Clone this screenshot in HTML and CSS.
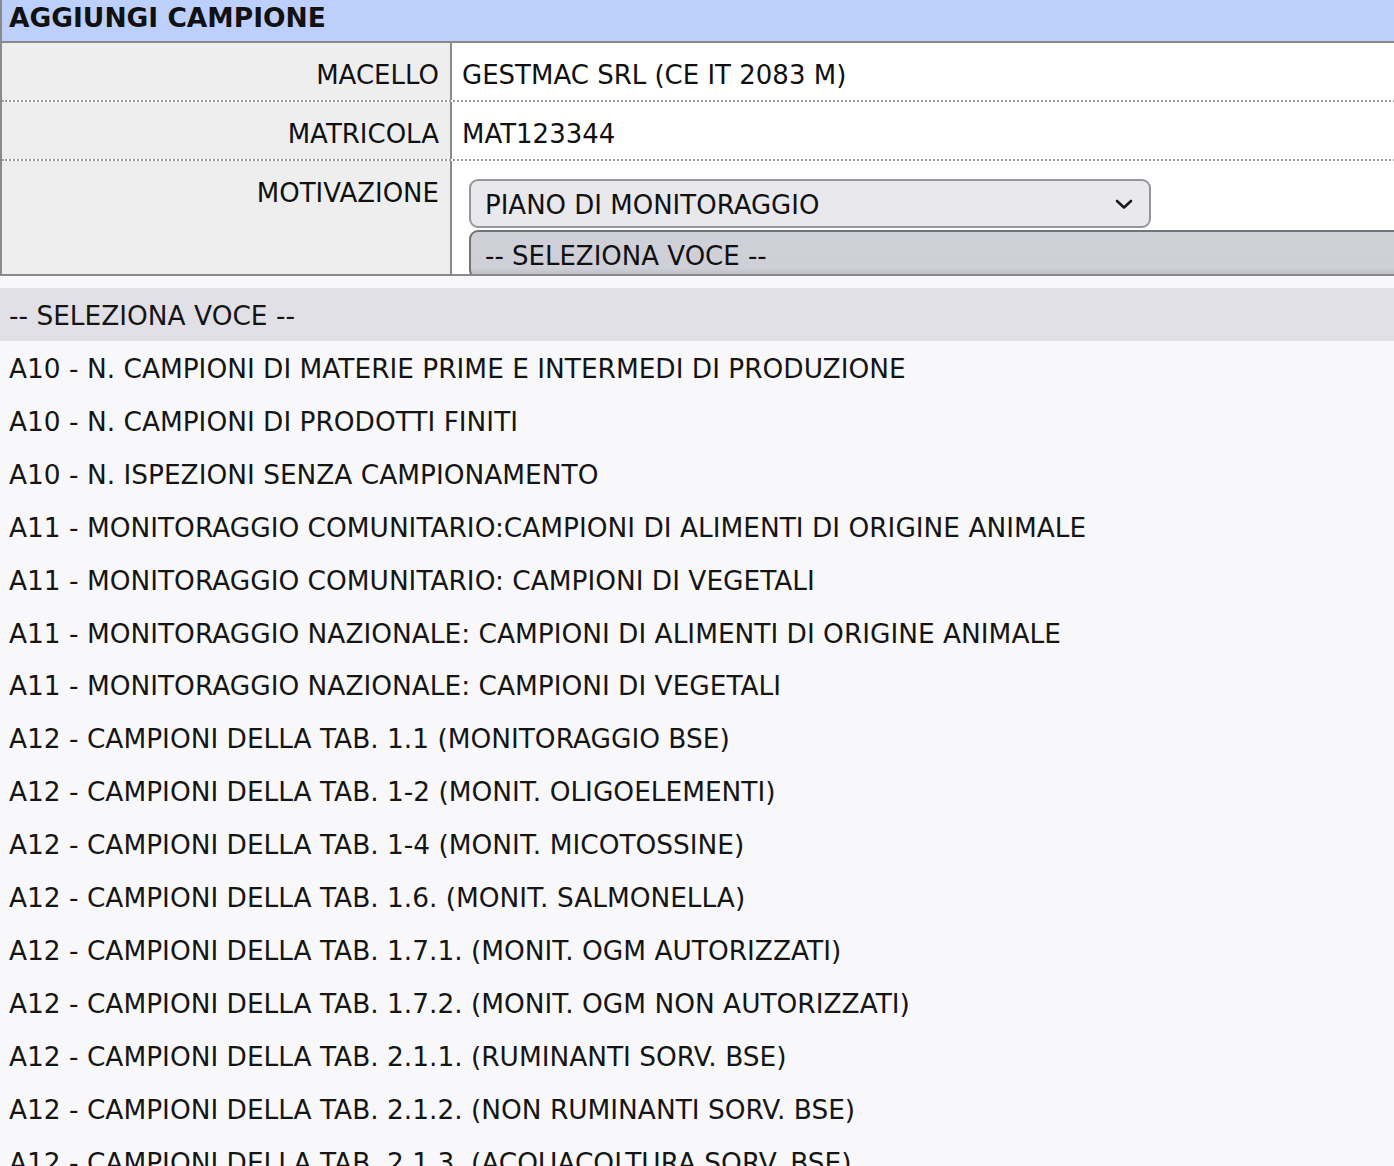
FILE: index.html
```html
<!DOCTYPE html>
<html lang="it">
<head>
<meta charset="utf-8">
<title>Aggiungi campione</title>
<link rel="stylesheet" href="styles.css">
</head>
<body>
<div class="panel">
  <div class="panel-title">AGGIUNGI CAMPIONE</div>
  <div class="row row-line">
    <div class="label">MACELLO</div>
    <div class="value">GESTMAC SRL (CE IT 2083 M)</div>
  </div>
  <div class="row row-line">
    <div class="label">MATRICOLA</div>
    <div class="value">MAT123344</div>
  </div>
  <div class="row row-last">
    <div class="label label-top">MOTIVAZIONE</div>
    <div class="value value-selects">
      <div class="select select-closed">
        <span>PIANO DI MONITORAGGIO</span>
        <svg class="chevron" width="18" height="12" viewBox="0 0 18 12"><path d="M2 3 L9 9.5 L16 3" fill="none" stroke="#1c1c1e" stroke-width="2.6" stroke-linecap="round" stroke-linejoin="round"/></svg>
      </div>
      <div class="select select-open">
        <span>-- SELEZIONA VOCE --</span>
      </div>
    </div>
  </div>
</div>
<ul class="dropdown">
  <li class="opt opt-active">-- SELEZIONA VOCE --</li>
  <li class="opt">A10 - N. CAMPIONI DI MATERIE PRIME E INTERMEDI DI PRODUZIONE</li>
  <li class="opt">A10 - N. CAMPIONI DI PRODOTTI FINITI</li>
  <li class="opt">A10 - N. ISPEZIONI SENZA CAMPIONAMENTO</li>
  <li class="opt">A11 - MONITORAGGIO COMUNITARIO:CAMPIONI DI ALIMENTI DI ORIGINE ANIMALE</li>
  <li class="opt">A11 - MONITORAGGIO COMUNITARIO: CAMPIONI DI VEGETALI</li>
  <li class="opt">A11 - MONITORAGGIO NAZIONALE: CAMPIONI DI ALIMENTI DI ORIGINE ANIMALE</li>
  <li class="opt">A11 - MONITORAGGIO NAZIONALE: CAMPIONI DI VEGETALI</li>
  <li class="opt">A12 - CAMPIONI DELLA TAB. 1.1 (MONITORAGGIO BSE)</li>
  <li class="opt">A12 - CAMPIONI DELLA TAB. 1-2 (MONIT. OLIGOELEMENTI)</li>
  <li class="opt">A12 - CAMPIONI DELLA TAB. 1-4 (MONIT. MICOTOSSINE)</li>
  <li class="opt">A12 - CAMPIONI DELLA TAB. 1.6. (MONIT. SALMONELLA)</li>
  <li class="opt">A12 - CAMPIONI DELLA TAB. 1.7.1. (MONIT. OGM AUTORIZZATI)</li>
  <li class="opt">A12 - CAMPIONI DELLA TAB. 1.7.2. (MONIT. OGM NON AUTORIZZATI)</li>
  <li class="opt">A12 - CAMPIONI DELLA TAB. 2.1.1. (RUMINANTI SORV. BSE)</li>
  <li class="opt">A12 - CAMPIONI DELLA TAB. 2.1.2. (NON RUMINANTI SORV. BSE)</li>
  <li class="opt">A12 - CAMPIONI DELLA TAB. 2.1.3. (ACQUACOLTURA SORV. BSE)</li>
</ul>
</body>
</html>
```
FILE: styles.css
```css
html, body {
  margin: 0;
  padding: 0;
  background: #ffffff;
  overflow: hidden;
}
body {
  font-family: "DejaVu Sans", Verdana, sans-serif;
  font-size: 26px;
  color: #111111;
}
.panel {
  border-left: 2px solid #8a8a8a;
  width: 1420px;
}
.panel-title {
  box-sizing: border-box;
  background: #bdcffb;
  border-bottom: 2px solid #8a8a8a;
  font-weight: bold;
  font-size: 26.5px;
  padding: 1px 0 0 7px;
  line-height: 34px;
  height: 43px;
}
.row {
  display: grid;
  grid-template-columns: 450px 1fr;
}
.row-line {
  border-bottom: 2px dotted #9a9a9a;
  height: 59px;
  box-sizing: border-box;
  padding-top: 4px;
}
.row-line .label,
.row-line .value {
  margin-top: -4px;
  padding-top: 6px;
}
.row-last {
  height: 115px;
  box-sizing: border-box;
  border-bottom: 2px solid #8a8a8a;
  overflow: hidden;
}
.label {
  background: #eeeeee;
  border-right: 2px solid #8a8a8a;
  text-align: right;
  padding: 0 11px 0 0;
  display: flex;
  align-items: center;
  justify-content: flex-end;
}
.label-top {
  align-items: flex-start;
  padding-top: 16px;
  line-height: 32px;
}
.value {
  display: flex;
  align-items: center;
  padding-left: 10px;
}
.value-selects {
  flex-direction: column;
  align-items: flex-start;
  padding: 18px 0 0 17px;
  gap: 2px;
}
.select {
  box-sizing: border-box;
  height: 49px;
  border-radius: 9px;
  display: flex;
  align-items: center;
  padding: 3px 16px 0 14px;
}
.select-closed {
  width: 682px;
  background: #e8e8ed;
  border: 2px solid #95959b;
  justify-content: space-between;
}
.select-closed .chevron {
  margin-top: -3px;
}
.select-open {
  width: 1000px;
  background: linear-gradient(#d0d0d8 0%, #cfcfd7 80%, #b8b8c0 100%);
  border: 2px solid #727278;
}
.chevron {
  display: block;
}
.dropdown {
  list-style: none;
  margin: 0;
  padding: 12px 0 0 0;
  background: #f8f8fa;
  height: 900px;
  font-size: 26.4px;
}
.opt {
  height: 52.93px;
  line-height: 52.93px;
  padding: 2px 0 0 9px;
  box-sizing: border-box;
  white-space: nowrap;
  color: #151515;
}
.opt-active {
  background: #e0e0e6;
}
```
